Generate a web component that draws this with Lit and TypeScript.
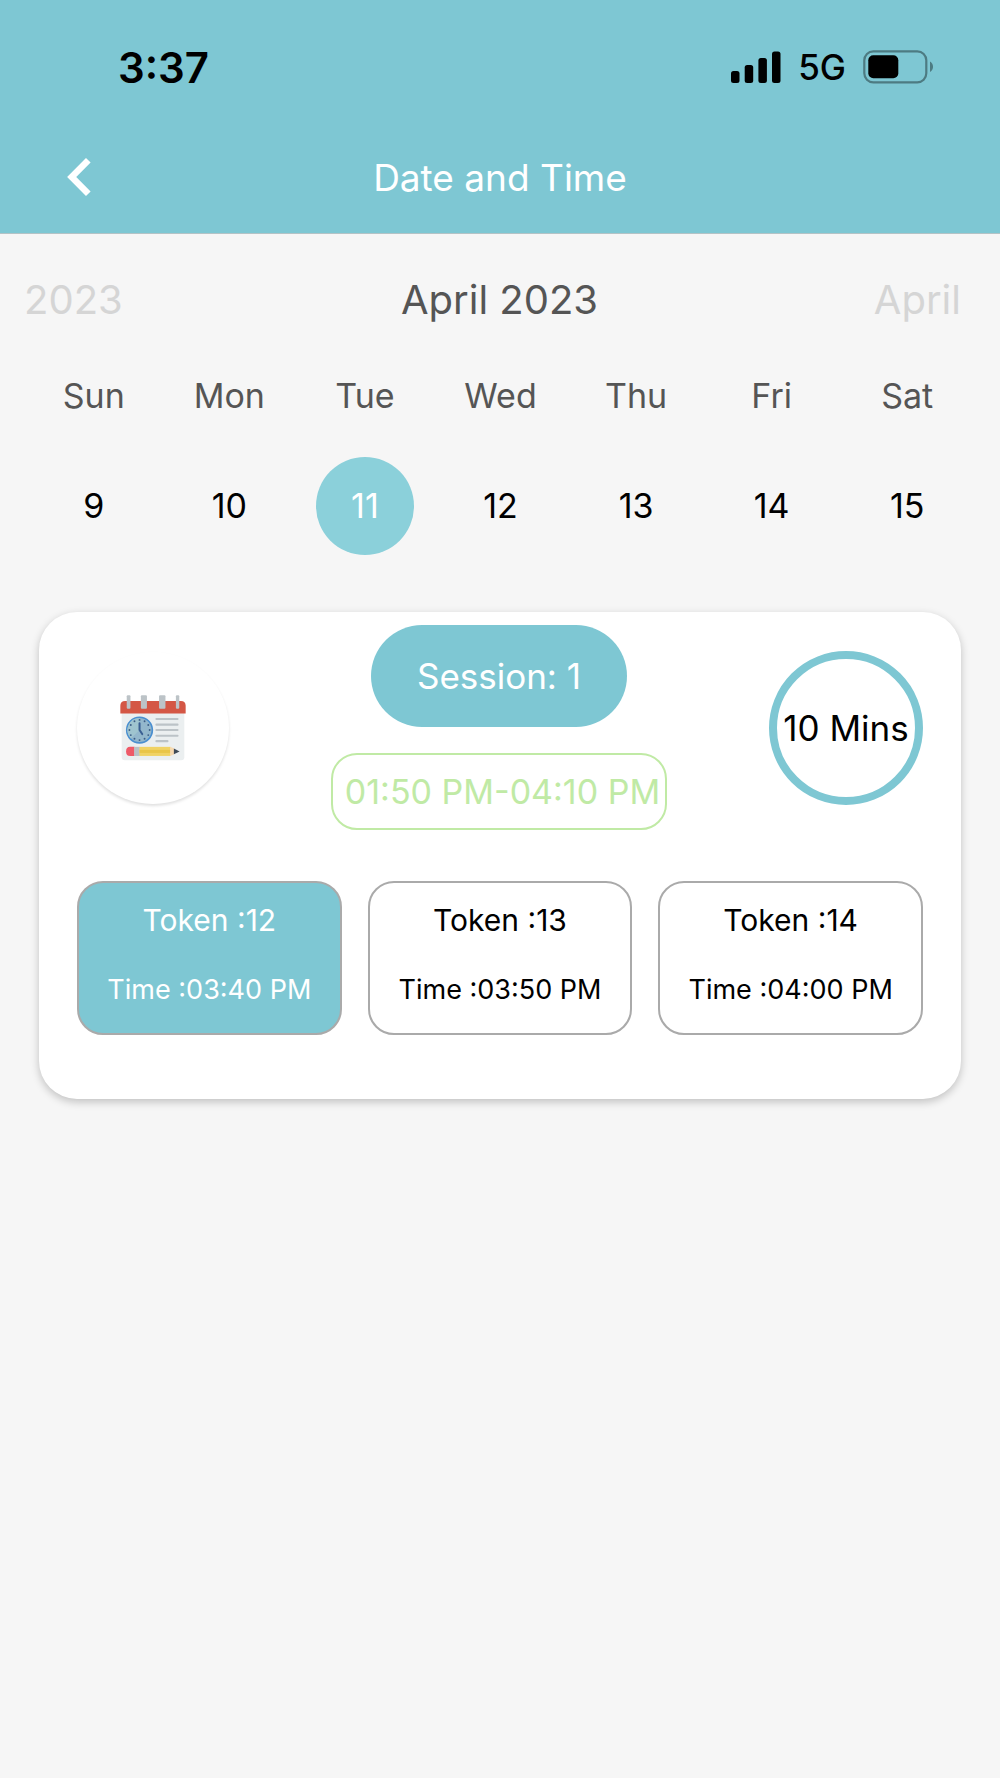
import { LitElement, html, svg, css } from "lit";
import { customElement, property, state } from "lit/decorators.js";
import { classMap } from "lit/directives/class-map.js";

interface Day {
  name: string;
  date: number;
}

interface Token {
  id: number;
  time: string;
}

const DAYS: Day[] = [
  { name: "Sun", date: 9 },
  { name: "Mon", date: 10 },
  { name: "Tue", date: 11 },
  { name: "Wed", date: 12 },
  { name: "Thu", date: 13 },
  { name: "Fri", date: 14 },
  { name: "Sat", date: 15 },
];

const TOKENS: Token[] = [
  { id: 12, time: "03:40 PM" },
  { id: 13, time: "03:50 PM" },
  { id: 14, time: "04:00 PM" },
];

@customElement("status-bar")
export class StatusBar extends LitElement {
  static styles = css`
    :host {
      display: flex;
      align-items: center;
      justify-content: space-between;
      height: 134px;
      padding: 0 66px 0 118px;
      color: #000;
    }
    .clock {
      font-size: 42px;
      font-weight: 600;
    }
    .indicators {
      display: flex;
      align-items: center;
      gap: 17px;
    }
    .network {
      font-size: 35px;
      font-weight: 500;
    }
    svg {
      display: block;
    }
  `;

  render() {
    return html`
      <span class="clock">3:37</span>
      <div class="indicators">
        <svg width="50" height="32" viewBox="0 0 50 32" aria-hidden="true">
          <rect x="0" y="20" width="8.5" height="12" rx="2.5" />
          <rect x="13.7" y="14" width="8.5" height="18" rx="2.5" />
          <rect x="27.4" y="7" width="8.5" height="25" rx="2.5" />
          <rect x="41" y="0.5" width="8.5" height="31.5" rx="2.5" />
        </svg>
        <span class="network">5G</span>
        <svg width="71" height="34" viewBox="0 0 71 34" aria-hidden="true">
          <rect x="1.3" y="1.3" width="62" height="31" rx="9" fill="none" stroke="#4d7b82" stroke-width="2.2" />
          <rect x="5.3" y="5.3" width="30" height="23" rx="5" />
          <path d="M67 11.5c4 2 4 8.5 0 10.5z" fill="#4d7b82" />
        </svg>
      </div>
    `;
  }
}

@customElement("week-picker")
export class WeekPicker extends LitElement {
  static styles = css`
    :host {
      display: block;
    }
    button {
      margin: 0;
      padding: 0;
      border: 0;
      background: none;
      color: inherit;
      font: inherit;
      cursor: pointer;
    }
    .months {
      display: grid;
      grid-template-columns: 1fr auto 1fr;
      align-items: center;
      height: 130px;
      padding: 0 39px 0 24px;
      font-size: 40px;
      color: #555;
    }
    .current {
      margin: 0;
      font: inherit;
      padding-left: 14px;
    }
    .jump {
      color: #d5d5d5;
      justify-self: start;
    }
    .jump.next {
      justify-self: end;
    }
    .week {
      display: grid;
      grid-template-columns: repeat(7, 1fr);
      padding: 0 25px 0 26px;
    }
    .day {
      display: flex;
      flex-direction: column;
      align-items: center;
      gap: 29px;
      font-size: 34px;
    }
    .name {
      line-height: 64px;
      color: #555;
    }
    .date {
      width: 98px;
      border-radius: 50%;
      line-height: 98px;
      color: #000;
    }
    .date.selected {
      background: #8bd0da;
      color: #fff;
    }
  `;

  @state() private selected = 11;

  render() {
    return html`
      <div class="months">
        <button class="jump">2023</button>
        <h2 class="current">April 2023</h2>
        <button class="jump next">April</button>
      </div>
      <div class="week">
        ${DAYS.map(
          (d) => html`
            <button class="day" @click=${() => (this.selected = d.date)}>
              <span class="name">${d.name}</span>
              <span class=${classMap({ date: true, selected: d.date === this.selected })}>${d.date}</span>
            </button>
          `
        )}
      </div>
    `;
  }
}

const hourMarks = Array.from({ length: 12 }, (_, i) => {
  const a = (i * Math.PI) / 6;
  return svg`<circle cx=${210 + 30 * Math.sin(a)} cy=${267 - 30 * Math.cos(a)} r="2.8" fill="#3c5d86" />`;
});

const scheduleIcon = html`
  <svg class="schedule" width="66" height="66" viewBox="152 163 196 196" aria-hidden="true">
    <rect x="157" y="190" width="186" height="167" rx="9" fill="#ebeff0" />
    <path d="M153 218v-23q0-14 14-14h166q14 0 14 14v23z" fill="#d45745" />
    <g fill="#bcc3c7">
      <rect x="172" y="164" width="11" height="40" rx="3" />
      <rect x="214" y="164" width="18" height="40" rx="3" />
      <rect x="268" y="164" width="19" height="40" rx="3" />
      <rect x="318" y="164" width="10" height="40" rx="3" />
      <rect x="257" y="231" width="69" height="6" rx="3" />
      <rect x="257" y="248" width="69" height="6" rx="3" />
      <rect x="257" y="264" width="69" height="6" rx="3" />
      <rect x="257" y="281" width="69" height="6" rx="3" />
      <rect x="257" y="297" width="39" height="6" rx="3" />
    </g>
    <circle cx="210" cy="267" r="38" fill="#93b7cc" stroke="#4a8fd0" stroke-width="5" />
    <path d="M184 292a36 36 0 0 1 26-61v36z" fill="#9fc4cf" />
    ${hourMarks}
    <path d="M210 247v20l8 12" fill="none" stroke="#3a5f92" stroke-width="6" stroke-linecap="round" stroke-linejoin="round" />
    <path d="M195 317h-13q-12 0-12 13.5t12 13.5h13z" fill="#ee5a68" />
    <rect x="194" y="317" width="17" height="27" fill="#b9c1c6" />
    <rect x="210" y="317" width="92" height="27" fill="#f0d264" />
    <rect x="210" y="326" width="92" height="9" fill="#e9c548" />
    <path d="M301 317l12 5v17l-12 5z" fill="#f6d9b0" />
    <path d="M312 322l17 8.5-17 8.5z" fill="#3f4a57" />
  </svg>
`;

@customElement("session-card")
export class SessionCard extends LitElement {
  static styles = css`
    :host {
      display: block;
      margin: 57px 39px 0;
      padding: 13px 38px 64px;
      border-radius: 38px;
      background: #fff;
      box-shadow: 0 3px 8px rgba(0, 0, 0, 0.22);
      color: #000;
    }
    .summary {
      display: flex;
      align-items: center;
      justify-content: space-between;
      margin-bottom: 51px;
    }
    .round {
      display: flex;
      align-items: center;
      justify-content: center;
      box-sizing: border-box;
      width: 154px;
      height: 154px;
      border-radius: 50%;
      white-space: nowrap;
    }
    .badge {
      width: 152px;
      height: 152px;
      box-shadow: 0 2px 3px rgba(0, 0, 0, 0.12);
    }
    .duration {
      border: 8px solid #7ec7d3;
      font-size: 35px;
    }
    .middle {
      display: flex;
      flex-direction: column;
      align-items: center;
      gap: 26px;
    }
    .title {
      margin: 0;
      padding: 0 46px;
      border-radius: 51px;
      background: #7ec7d3;
      color: #fff;
      font-size: 35px;
      font-weight: 400;
      line-height: 102px;
    }
    .hours {
      padding: 0 5px 0 12px;
      border: 2px solid #c0eaa5;
      border-radius: 26px;
      color: #c0eaa5;
      font-size: 34px;
      line-height: 73px;
      white-space: nowrap;
    }
    .tokens {
      display: grid;
      grid-template-columns: repeat(3, 1fr);
      gap: 26px;
    }
    .token {
      display: flex;
      flex-direction: column;
      align-items: center;
      gap: 22px;
      margin: 0;
      padding: 13px 0 19px;
      border: 2px solid #aaa;
      border-radius: 26px;
      background: #fff;
      color: #000;
      font: inherit;
      line-height: 48px;
      white-space: nowrap;
      cursor: pointer;
    }
    .token.selected {
      background: #7ec7d3;
      color: #fff;
    }
    .number {
      font-size: 30px;
    }
    .time {
      font-size: 27px;
    }
    .schedule {
      display: block;
    }
  `;

  @property({ attribute: false }) tokens: Token[] = TOKENS;
  @state() private selected = 12;

  render() {
    return html`
      <div class="summary">
        <div class="round badge">${scheduleIcon}</div>
        <div class="middle">
          <h3 class="title">Session: 1</h3>
          <div class="hours">01:50 PM-04:10 PM</div>
        </div>
        <div class="round duration">10 Mins</div>
      </div>
      <div class="tokens">
        ${this.tokens.map(
          (t) => html`
            <button
              class=${classMap({ token: true, selected: t.id === this.selected })}
              @click=${() => (this.selected = t.id)}
            >
              <span class="number">Token :${t.id}</span>
              <span class="time">Time :${t.time}</span>
            </button>
          `
        )}
      </div>
    `;
  }
}

@customElement("app-root")
export class AppRoot extends LitElement {
  static styles = css`
    :host {
      display: block;
      min-height: 100vh;
      background: #f6f6f6;
      font-family: Inter, "Liberation Sans", sans-serif;
    }
    .header {
      padding-bottom: 13px;
      border-bottom: 1px solid #b4c3c6;
      background: #7ec7d3;
    }
    .nav {
      display: grid;
      grid-template-columns: 1fr auto 1fr;
      align-items: center;
      height: 86px;
      padding: 0 64px;
    }
    .back {
      justify-self: start;
      margin: 0;
      padding: 0;
      border: 0;
      background: none;
      cursor: pointer;
    }
    .back svg {
      display: block;
    }
    .heading {
      margin: 0;
      color: #fff;
      font-size: 37px;
      font-weight: 400;
    }
  `;

  render() {
    return html`
      <header class="header">
        <status-bar></status-bar>
        <nav class="nav">
          <button class="back" aria-label="Back">
            <svg width="30" height="40" viewBox="0 0 30 40" aria-hidden="true">
              <path d="M24.3 3.2L7.7 20l16.6 16.8" fill="none" stroke="#fff" stroke-width="6.5" />
            </svg>
          </button>
          <h1 class="heading">Date and Time</h1>
        </nav>
      </header>
      <main>
        <week-picker></week-picker>
        <session-card></session-card>
      </main>
    `;
  }
}
